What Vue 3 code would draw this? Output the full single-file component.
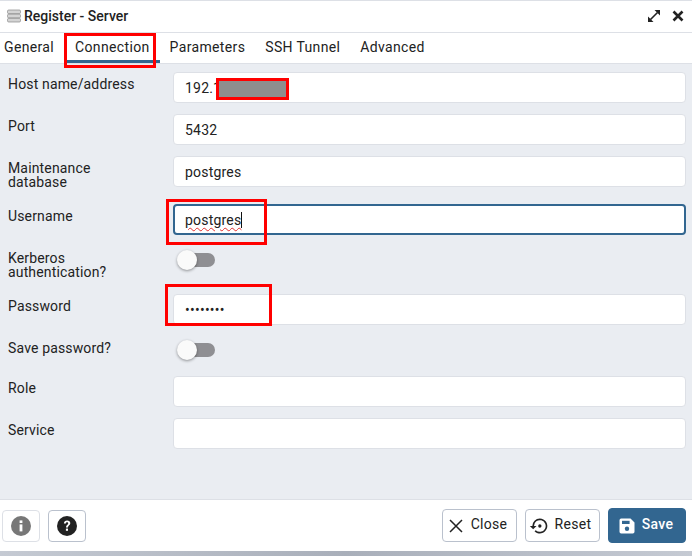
<script setup>
const fieldsA = [
  { label: 'Port', value: '5432' },
  { label: 'Maintenance database', value: 'postgres', tall: true },
]
const tabs = ['General', 'Connection', 'Parameters', 'SSH Tunnel', 'Advanced']
</script>

<template>
  <div class="dialog">
    <header class="title">
      <span class="title-left">
        <svg class="server" width="14" height="14" viewBox="0 0 14 14">
          <rect x="0.5" y="1" width="13" height="3.6" rx="1.2" fill="#d4d4d4" stroke="#888" stroke-width="0.7" />
          <rect x="0.5" y="5.2" width="13" height="3.6" rx="1.2" fill="#d4d4d4" stroke="#888" stroke-width="0.7" />
          <rect x="0.5" y="9.4" width="13" height="3.6" rx="1.2" fill="#d4d4d4" stroke="#888" stroke-width="0.7" />
        </svg>
        Register - Server
      </span>
      <span class="title-right">
        <svg width="14" height="14" viewBox="0 0 14 14">
          <path d="M3.5 10.5 L10.5 3.5" stroke="#222" stroke-width="1.6" />
          <path d="M7.5 1 H13 V6.5 Z" fill="#222" />
          <path d="M1 7.5 V13 H6.5 Z" fill="#222" />
        </svg>
        <svg width="12" height="12" viewBox="0 0 12 12">
          <path d="M1.5 1.5 L10.5 10.5 M10.5 1.5 L1.5 10.5" stroke="#222" stroke-width="2.6" />
        </svg>
      </span>
    </header>

    <nav class="tabs">
      <span v-for="t in tabs" :key="t" class="tab" :class="{ active: t === 'Connection', first: t === 'General' }">{{ t }}</span>
    </nav>

    <main class="form">
      <div class="row">
        <label class="lab">Host name/address</label>
        <div class="input">192.1</div>
      </div>
      <div v-for="f in fieldsA" :key="f.label" class="row" :class="{ tall: f.tall }">
        <label class="lab">{{ f.label }}</label>
        <div class="input">{{ f.value }}</div>
      </div>
      <div class="row">
        <label class="lab">Username</label>
        <div class="input focused"><span class="squiggle">postgres</span><span class="caret"></span></div>
      </div>
      <div class="row tall">
        <label class="lab">Kerberos authentication?</label>
        <div class="switch"><span class="track"></span><span class="thumb"></span></div>
      </div>
      <div class="row">
        <label class="lab">Password</label>
        <div class="input dots">••••••••</div>
      </div>
      <div class="row short">
        <label class="lab">Save password?</label>
        <div class="switch"><span class="track"></span><span class="thumb"></span></div>
      </div>
      <div class="row">
        <label class="lab">Role</label>
        <div class="input"></div>
      </div>
      <div class="row">
        <label class="lab">Service</label>
        <div class="input"></div>
      </div>
    </main>

    <footer class="foot">
      <div class="foot-left">
        <button class="icon-btn faded">
          <svg width="20" height="20" viewBox="0 0 20 20">
            <circle cx="10" cy="10" r="10" fill="#777" />
            <rect x="8.6" y="8.4" width="2.8" height="7" fill="#fff" />
            <rect x="8.6" y="4.4" width="2.8" height="2.6" fill="#fff" />
          </svg>
        </button>
        <button class="icon-btn">
          <svg width="20" height="20" viewBox="0 0 20 20">
            <circle cx="10" cy="10" r="10" fill="#222" />
            <path d="M6.9 7.6 C6.9 5.6 8.3 4.6 10.1 4.6 C12 4.6 13.3 5.7 13.3 7.3 C13.3 9.4 10.9 9.4 10.9 11.5 H9 C9 8.7 11.2 8.7 11.2 7.4 C11.2 6.7 10.8 6.3 10.1 6.3 C9.3 6.3 8.9 6.8 8.9 7.6 Z" fill="#fff" />
            <rect x="8.9" y="12.6" width="2.1" height="2.2" fill="#fff" />
          </svg>
        </button>
      </div>
      <div class="foot-right">
        <button class="btn close">
          <svg width="16" height="16" viewBox="0 0 16 16">
            <path d="M2 2 L14 14 M14 2 L2 14" stroke="#222" stroke-width="1.5" />
          </svg>
          <span>Close</span>
        </button>
        <button class="btn reset">
          <svg width="20" height="20" viewBox="0 0 24 24">
            <path d="M13 3a9 9 0 0 0-9 9H1l4 4 4-4H6a7 7 0 1 1 2.05 4.95l-1.42 1.42A9 9 0 1 0 13 3z" fill="#222" />
            <circle cx="13" cy="12" r="2" fill="#222" />
          </svg>
          <span>Reset</span>
        </button>
        <button class="btn primary">
          <svg width="16" height="16" viewBox="0 0 16 16">
            <path d="M2.2 0.5 H11.5 L15.5 4.5 V13.8 A1.7 1.7 0 0 1 13.8 15.5 H2.2 A1.7 1.7 0 0 1 0.5 13.8 V2.2 A1.7 1.7 0 0 1 2.2 0.5 Z" fill="#fff" />
            <rect x="3" y="2.8" width="7.6" height="3.2" fill="#326690" />
            <circle cx="8" cy="10.8" r="2.2" fill="#326690" />
          </svg>
          <span>Save</span>
        </button>
      </div>
    </footer>
    <div class="strip"></div>

    <div class="mark m-tab"></div>
    <div class="mark m-host"></div>
    <div class="mark m-user"></div>
    <div class="mark m-pass"></div>
  </div>
</template>

<style scoped>
.dialog {
  position: relative;
  width: 692px;
  height: 556px;
  display: flex;
  flex-direction: column;
  overflow: hidden;
  background: #fff;
  font-family: Roboto, "Liberation Sans", sans-serif;
  font-size: 14px;
  color: #222;
  border-top: 1px solid #dde0e6;
  box-sizing: border-box;
}
.title {
  flex: none;
  display: flex;
  justify-content: space-between;
  align-items: center;
  padding: 0 7px 2px;
  height: 29px;
  border-bottom: 1px solid #dde0e6;
}
.title-left {
  display: flex;
  align-items: center;
  gap: 3px;
  font-weight: 500;
  font-size: 14px;
}
.title-right {
  display: flex;
  align-items: center;
  gap: 11px;
  padding-right: 1px;
  padding-top: 1px;
}
.tabs {
  height: 30px;
  flex: none;
  display: flex;
  border-bottom: 1px solid #dde0e6;
  letter-spacing: 0.35px;
}
.tab {
  box-sizing: border-box;
  height: 30px;
  padding: 6px 10px 0;
  white-space: nowrap;
  color: #222;
}
.tab.first {
  padding-left: 4px;
  padding-right: 11px;
}
.tab.active {
  border-bottom: 3px solid #326690;
}
.form {
  flex: 1;
  background: #eaedf2;
  padding: 8px 6px 0 8px;
  display: flex;
  flex-direction: column;
  gap: 11px;
}
.row {
  display: flex;
  height: 31px;
  flex: none;
}
.row.tall {
  height: 37px;
}
.row.short {
  height: 29px;
}
.lab {
  width: 165px;
  flex: none;
  padding-top: 5px;
  line-height: 14px;
  color: #222;
  letter-spacing: 0.15px;
  box-sizing: border-box;
  padding-right: 30px;
}
.input {
  flex: 1;
  height: 31px;
  box-sizing: border-box;
  background: #fff;
  border: 1px solid #dde0e6;
  border-radius: 4px;
  padding: 0 11px;
  line-height: 30px;
  letter-spacing: 0.2px;
  position: relative;
}
.input.focused {
  border: 2px solid #326690;
  padding: 0 10px;
  line-height: 28px;
}
.input.dots {
  letter-spacing: 0.25px;
}
.squiggle {
  text-decoration: underline wavy #e03030 1px;
  text-underline-offset: 2px;
}
.caret {
  display: inline-block;
  width: 1px;
  height: 16px;
  background: #111;
  vertical-align: -3px;
}
.switch {
  position: relative;
  width: 38px;
  height: 28px;
  margin-left: 4px;
}
.track {
  position: absolute;
  left: 4px;
  top: 7px;
  width: 34px;
  height: 14px;
  border-radius: 7px;
  background: #8f8f93;
}
.thumb {
  position: absolute;
  left: 0;
  top: 4px;
  width: 20px;
  height: 20px;
  border-radius: 50%;
  background: #fafafa;
  box-shadow: 0 1px 3px rgba(0, 0, 0, 0.4);
}
.foot {
  height: 52px;
  flex: none;
  box-sizing: border-box;
  border-top: 1px solid #dde0e6;
  display: flex;
  justify-content: space-between;
  align-items: center;
  padding: 0 6px 0 2px;
  background: #fff;
}
.foot-left {
  display: flex;
  gap: 8px;
}
.foot-right {
  display: flex;
  align-items: center;
  gap: 8px;
}
.icon-btn {
  width: 38px;
  height: 32px;
  box-sizing: border-box;
  padding: 0;
  background: #fff;
  border: 1px solid #bac1cd;
  border-radius: 4px;
  display: flex;
  align-items: center;
  justify-content: center;
}
.icon-btn.faded {
  border-color: #dde0e6;
}
.btn {
  box-sizing: border-box;
  width: 75px;
  height: 33px;
  padding: 0 2px 0 0;
  display: flex;
  align-items: center;
  justify-content: center;
  gap: 7px;
  background: #fff;
  border: 1px solid #bac1cd;
  border-radius: 4px;
  font: inherit;
  letter-spacing: 0.3px;
  color: #222;
}
.btn span {
  margin-bottom: 3px;
}
.btn.close {
  padding-right: 4px;
}
.btn.reset svg {
  margin-left: -3px;
  margin-right: -1px;
}
.btn.primary {
  width: 78px;
  height: 35px;
  background: #326690;
  border-color: #326690;
  color: #fff;
  font-weight: 500;
}
.strip {
  height: 5px;
  flex: none;
  background: linear-gradient(90deg, #c5cad3, #a9afba 50%, #c5cad3);
}
.mark {
  position: absolute;
  box-sizing: border-box;
  border: 3px solid #f00;
}
.m-tab { left: 64px; top: 32px; width: 92px; height: 35px; }
.m-host { left: 216px; top: 77px; width: 73px; height: 22px; background: #8e8e8e; }
.m-user { left: 166px; top: 198px; width: 101px; height: 46px; }
.m-pass { left: 165px; top: 283px; width: 107px; height: 42px; }
</style>
